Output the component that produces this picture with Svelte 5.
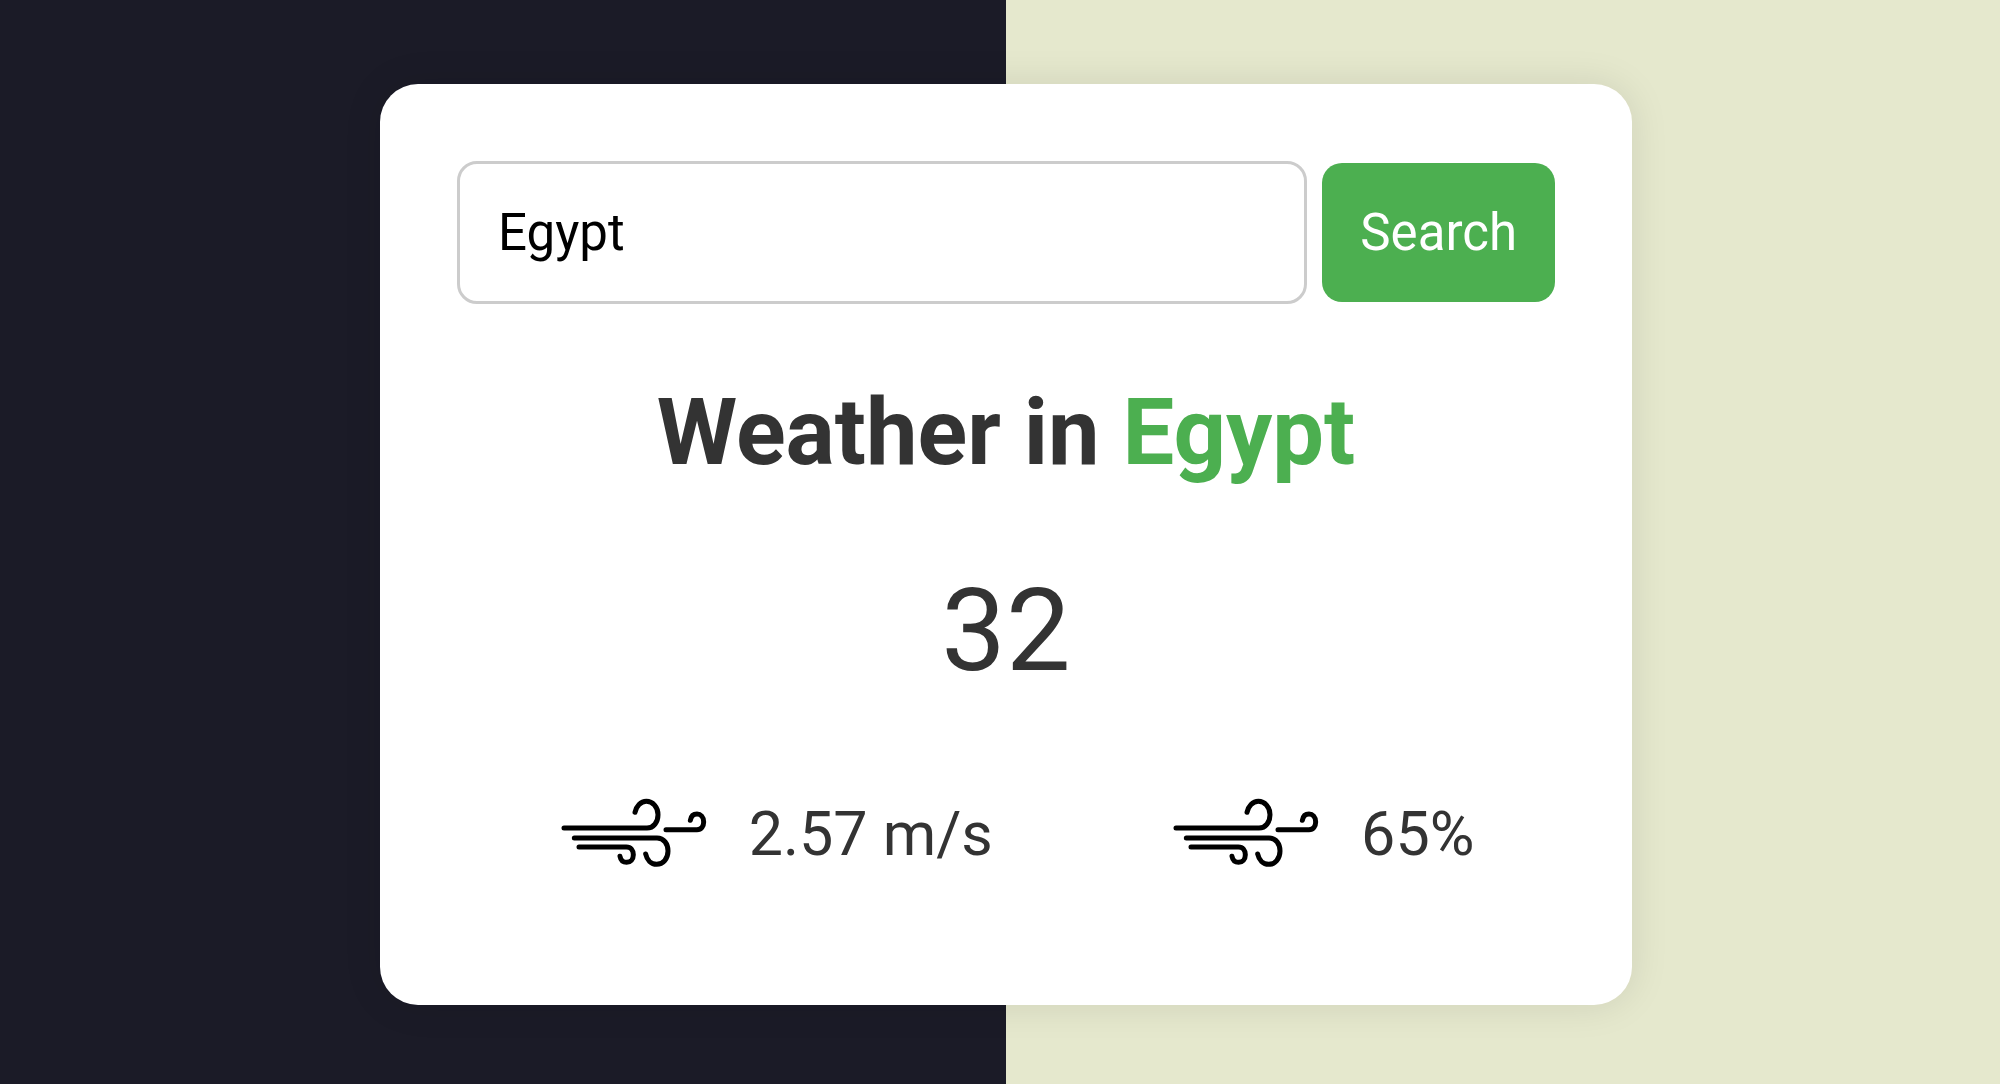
<script>
  let query = $state('Egypt');
  let city = $state('Egypt');
  const temperature = 32;
  const metrics = [
    { label: 'Wind speed', value: '2.57 m/s' },
    { label: 'Humidity', value: '65%' }
  ];

  function search(event) {
    event.preventDefault();
    if (query.trim()) city = query.trim();
  }
</script>

<main class="page">
  <section class="card">
    <form class="search" onsubmit={search}>
      <input class="field" type="text" aria-label="City" bind:value={query} />
      <button class="submit" type="submit">Search</button>
    </form>
    <h1 class="title">Weather in <span class="city">{city}</span></h1>
    <p class="temperature">{temperature}</p>
    <ul class="metrics">
      {#each metrics as metric}
        <li class="metric" aria-label={metric.label}>
          <svg class="icon" viewBox="18 40 459 231" aria-hidden="true">
            <path d="M39 142H288C308 142 321 124 321 102C321 79 305 62 286 62C269 62 256 77 252 95" />
            <path d="M70 172H318C339 172 351 190 351 211C351 234 336 251 317 251C300 251 288 238 284 220" />
            <path d="M84 199H226C240 199 247 210 247 222C247 236 238 245 227 245C216 245 209 238 207 227" />
            <path d="M345 147H438C451 147 458 136 458 124C458 109 449 100 438 100C427 100 420 107 418 119" />
          </svg>
          <span>{metric.value}</span>
        </li>
      {/each}
    </ul>
  </section>
</main>

<style>
  :global(body) {
    margin: 0;
  }

  .page {
    box-sizing: border-box;
    min-height: 100vh;
    display: flex;
    justify-content: center;
    align-items: center;
    padding: 64px 0 60px 12px;
    background: linear-gradient(to right, #1b1b27 50.3%, #e5e8cd 50.3%);
    color: #333;
    font-family: Roboto, Arial, sans-serif;
  }

  .card {
    box-sizing: border-box;
    width: 100%;
    max-width: 1252px;
    padding: 77px 77px 131px;
    border-radius: 38px;
    background: #fff;
    box-shadow: 0 0 38px rgba(0, 0, 0, 0.1);
  }

  .search {
    display: flex;
    align-items: center;
    gap: 15px;
  }

  .field {
    box-sizing: border-box;
    flex: 1;
    min-width: 0;
    height: 143px;
    padding: 0 38px;
    border: 3px solid #ccc;
    border-radius: 20px;
    outline: none;
    background: #fff;
    color: #000;
    font: 400 51px Roboto, Arial, sans-serif;
  }

  .submit {
    height: 139px;
    padding: 0 38px;
    border: 0;
    border-radius: 20px;
    background: #4caf50;
    color: #fff;
    font: 400 51px Roboto, Arial, sans-serif;
    cursor: pointer;
  }

  .title {
    margin: 75px 0 77px;
    font-size: 92px;
    font-weight: 700;
    line-height: 108px;
    text-align: center;
  }

  .city {
    color: #4caf50;
  }

  .temperature {
    margin: 0 0 96px;
    font-size: 115px;
    line-height: 134px;
    text-align: center;
  }

  .metrics {
    display: flex;
    flex-wrap: wrap;
    justify-content: space-around;
    margin: 0;
    padding: 0 0 0 4px;
    list-style: none;
  }

  .metric {
    display: flex;
    align-items: flex-start;
    gap: 39px;
    padding-left: 15px;
    font-size: 61px;
    line-height: 80px;
  }

  .icon {
    width: 153px;
    height: 77px;
    fill: none;
    stroke: #000;
    stroke-width: 15;
    stroke-linecap: round;
  }
</style>
